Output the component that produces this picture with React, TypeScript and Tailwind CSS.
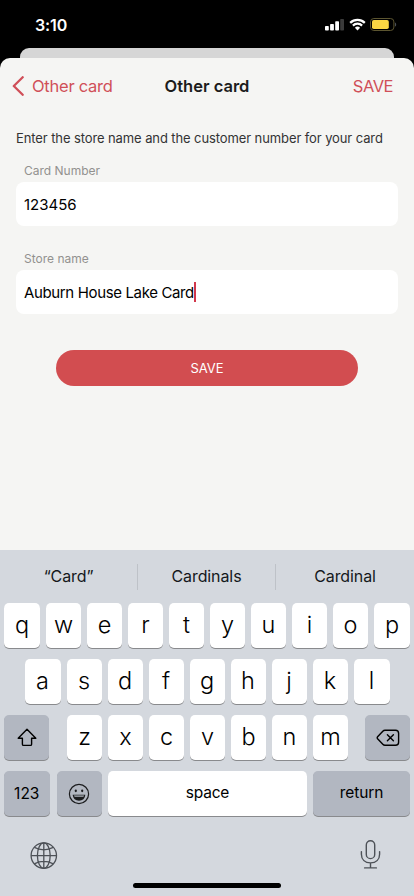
import { ReactNode } from "react";
import clsx from "clsx";

const suggestions = ["“Card”", "Cardinals", "Cardinal"];
const topRow = ["q", "w", "e", "r", "t", "y", "u", "i", "o", "p"];
const middleRow = ["a", "s", "d", "f", "g", "h", "j", "k", "l"];
const bottomRow = ["z", "x", "c", "v", "b", "n", "m"];

function StatusBar() {
  return (
    <div className="flex h-12 items-start justify-between pl-[35px] pr-[17px] text-white">
      <span className="mt-[14px] text-[16px] font-semibold leading-[22px] tracking-[-0.1px]">
        3:10
      </span>
      <div className="mt-[18px] flex items-start">
        <svg width="19" height="13" viewBox="0 0 19 13" fill="#fff">
          <rect x="0" y="8" width="3.8" height="4.5" rx="0.8" />
          <rect x="5.1" y="6" width="3.8" height="6.5" rx="0.8" />
          <rect x="10.2" y="3.3" width="3.8" height="9.2" rx="0.8" />
          <rect x="15.2" y="1" width="3.8" height="11.5" rx="0.8" fill="#3a3a3a" />
        </svg>
        <svg className="ml-[4.5px]" width="17" height="13" viewBox="0 0 17 13">
          <path
            d="M1.2 4.9A10.4 10.4 0 0 1 15.8 4.9M3.9 7.6A6.5 6.5 0 0 1 13.1 7.6"
            fill="none"
            stroke="#fff"
            strokeWidth="2.2"
          />
          <path d="M8.5 12.4 5.9 9.8A3.7 3.7 0 0 1 11.1 9.8Z" fill="#fff" />
        </svg>
        <svg className="ml-[4.5px]" width="27" height="13" viewBox="0 0 27 13">
          <rect
            x="0.5"
            y="0.5"
            width="23.4"
            height="12"
            rx="3.4"
            fill="none"
            stroke="#5c5530"
          />
          <rect x="2" y="2" width="16.8" height="9" rx="1.8" fill="#fad643" />
          <path d="M25 4.4C26.6 5 26.6 8 25 8.6Z" fill="#4a5058" />
        </svg>
      </div>
    </div>
  );
}

function Field({ label, children }: { label: string; children: ReactNode }) {
  return (
    <div>
      <div className="h-4 pl-2 pt-px text-[12px] leading-4 text-[#92918f]">{label}</div>
      <div className="mt-1 flex h-11 items-center rounded-lg bg-white pl-2 text-[15px] text-black">
        {children}
      </div>
    </div>
  );
}

function Key({
  children,
  className,
  dark = false,
}: {
  children: ReactNode;
  className?: string;
  dark?: boolean;
}) {
  return (
    <div
      className={clsx(
        "flex h-[45px] shrink-0 items-center justify-center rounded-[5px] text-black shadow-[0_1px_0_#898a8d]",
        dark ? "bg-[#b2b7c1]" : "bg-white",
        className
      )}
    >
      {children}
    </div>
  );
}

function LetterKeys({ letters, wideEnds = false }: { letters: string[]; wideEnds?: boolean }) {
  return (
    <div className="flex justify-center gap-[6px]">
      {letters.map((letter, i) => (
        <Key
          key={letter}
          className={
            wideEnds && (i === 0 || i === letters.length - 1) ? "w-9" : "w-[35px]"
          }
        >
          <span className="-mt-px text-[23.5px] font-light leading-7">{letter}</span>
        </Key>
      ))}
    </div>
  );
}

function Keyboard() {
  return (
    <div className="flex h-[346px] flex-col bg-[#d4d8de]">
      <div className="flex h-[53px] items-center">
        {suggestions.map((word, i) => (
          <div
            key={word}
            className={clsx(
              "flex h-[26px] items-center justify-center pb-[2px] text-[16px] tracking-[-0.1px] text-[#15181c]",
              i === 0 ? "w-[137px]" : "border-l border-[#bec2c8]",
              i === 1 && "w-[138px]",
              i === 2 && "w-[139px]"
            )}
          >
            {word}
          </div>
        ))}
      </div>
      <div className="flex flex-col gap-[11px] px-1">
        <LetterKeys letters={topRow} wideEnds />
        <LetterKeys letters={middleRow} wideEnds />
        <div className="flex justify-between">
          <Key dark className="w-[45px]">
            <svg width="20" height="19" viewBox="0 0 20 19" fill="none">
              <path
                d="M10 1.2 18.8 10.2H14.6V16.2Q14.6 17.4 13.4 17.4H6.6Q5.4 17.4 5.4 16.2V10.2H1.2Z"
                stroke="#000"
                strokeWidth="1.4"
                strokeLinejoin="round"
              />
            </svg>
          </Key>
          <div className="ml-[1px]">
            <LetterKeys letters={bottomRow} />
          </div>
          <Key dark className="w-[45px]">
            <svg width="24" height="18" viewBox="0 0 24 18" fill="none">
              <path
                d="M9 1.2H19.5Q22.6 1.2 22.6 4.3V13.2Q22.6 16.3 19.5 16.3H9Q7.7 16.3 6.8 15.3L1.6 9.8Q.8 8.8 1.6 7.8L6.8 2.2Q7.7 1.2 9 1.2Z"
                stroke="#000"
                strokeWidth="1.4"
              />
              <path
                d="M11.4 5.7 17.4 11.7M17.4 5.7 11.4 11.7"
                stroke="#000"
                strokeWidth="1.4"
                strokeLinecap="round"
              />
            </svg>
          </Key>
        </div>
        <div className="flex text-[15.5px] tracking-[-0.2px]">
          <Key dark className="w-[45.5px]">
            <span className="pt-px tracking-normal">123</span>
          </Key>
          <Key dark className="ml-[7px] w-[45.5px]">
            <svg width="22" height="22" viewBox="0 0 22 22" fill="none">
              <circle cx="11" cy="11" r="9.6" stroke="#1b1c1e" strokeWidth="1.2" />
              <ellipse cx="7.8" cy="7.8" rx="1.1" ry="1.4" fill="#1b1c1e" />
              <ellipse cx="14.2" cy="7.8" rx="1.1" ry="1.4" fill="#1b1c1e" />
              <path
                d="M4.7 11.8H17.3C17 15.6 14.5 17.7 11 17.7S5 15.6 4.7 11.8Z"
                fill="#1b1c1e"
              />
              <path d="M5.9 12.4H16.1Q15.8 13.6 14.8 13.8H7.2Q6.2 13.6 5.9 12.4Z" fill="#b2b7c1" />
            </svg>
          </Key>
          <Key className="ml-[6px] w-[199px]">
            <span className="-mt-px">space</span>
          </Key>
          <Key dark className="ml-[6px] w-[97px]">
            <span className="-mt-px tracking-[-0.1px]">return</span>
          </Key>
        </div>
      </div>
      <div className="flex items-start justify-between pl-[30px] pr-[33px] pt-[24px]">
        <svg
          className="mt-[2px]"
          width="28"
          height="28"
          viewBox="0 0 28 28"
          fill="none"
          stroke="#4d5157"
          strokeWidth="1.3"
        >
          <circle cx="13.8" cy="13.6" r="12.7" />
          <ellipse cx="13.8" cy="13.6" rx="6.4" ry="12.7" />
          <path d="M13.8 1V26.2M1.2 13.6H26.4M4.3 5.4Q13.8 10.2 23.3 5.4M4.3 21.8Q13.8 17 23.3 21.8" />
        </svg>
        <svg
          width="21"
          height="30"
          viewBox="0 0 21 30"
          fill="none"
          stroke="#4d5157"
          strokeWidth="1.4"
          strokeLinecap="round"
        >
          <rect x="6.3" y="0.8" width="8.4" height="17.8" rx="4.2" />
          <path d="M1.4 11.6V14.3C1.4 19.6 5 22.9 10.5 22.9S19.6 19.6 19.6 14.3V11.6M10.5 22.9V27.9M4.6 27.9H16.4" />
        </svg>
      </div>
      <div className="mx-auto mb-2 mt-auto h-[5px] w-[148px] rounded-full bg-black" />
    </div>
  );
}

export default function App() {
  return (
    <div className="flex h-[896px] w-[414px] flex-col overflow-hidden bg-black font-['Inter',sans-serif]">
      <StatusBar />
      {/* edge of the screen underneath the sheet */}
      <div className="mx-5 h-[10px] rounded-t-[9px] bg-[#d6d6d6]" />
      <div className="flex-1 rounded-t-[10px] bg-[#f5f5f3]">
        <div className="grid h-14 grid-cols-3 items-center pl-3 pr-[21px] text-[16.5px] text-[#d04f58]">
          <div className="flex items-center">
            <svg width="12" height="20" viewBox="0 0 12 20" fill="none">
              <path
                d="M10.7 1.2 1.8 10 10.7 18.8"
                stroke="#d04f58"
                strokeWidth="2.3"
                strokeLinecap="round"
                strokeLinejoin="round"
              />
            </svg>
            <span className="ml-2 whitespace-nowrap tracking-[-0.25px]">Other card</span>
          </div>
          <h1 className="ml-[9px] text-center font-semibold text-[#1c1c1c]">Other card</h1>
          <span className="text-right tracking-[-0.5px]">SAVE</span>
        </div>
        <div className="px-4">
          <p className="mt-[14px] whitespace-nowrap text-[13px] leading-5 tracking-[-0.1px] text-[#333]">
            Enter the store name and the customer number for your card
          </p>
          <div className="mt-[14px] flex flex-col gap-6">
            <Field label="Card Number">
              <span className="pt-[2px]">123456</span>
            </Field>
            <Field label="Store name">
              <span className="pt-[2px] tracking-[-0.36px]">Auburn House Lake Card</span>
              <span className="h-5 w-[2px] bg-[#d2374b]" />
            </Field>
          </div>
          <div className="mx-10 mt-9 flex h-9 items-center justify-center rounded-full bg-[#d24d50] pt-px text-[13px] text-white">
            SAVE
          </div>
        </div>
      </div>
      <Keyboard />
    </div>
  );
}
